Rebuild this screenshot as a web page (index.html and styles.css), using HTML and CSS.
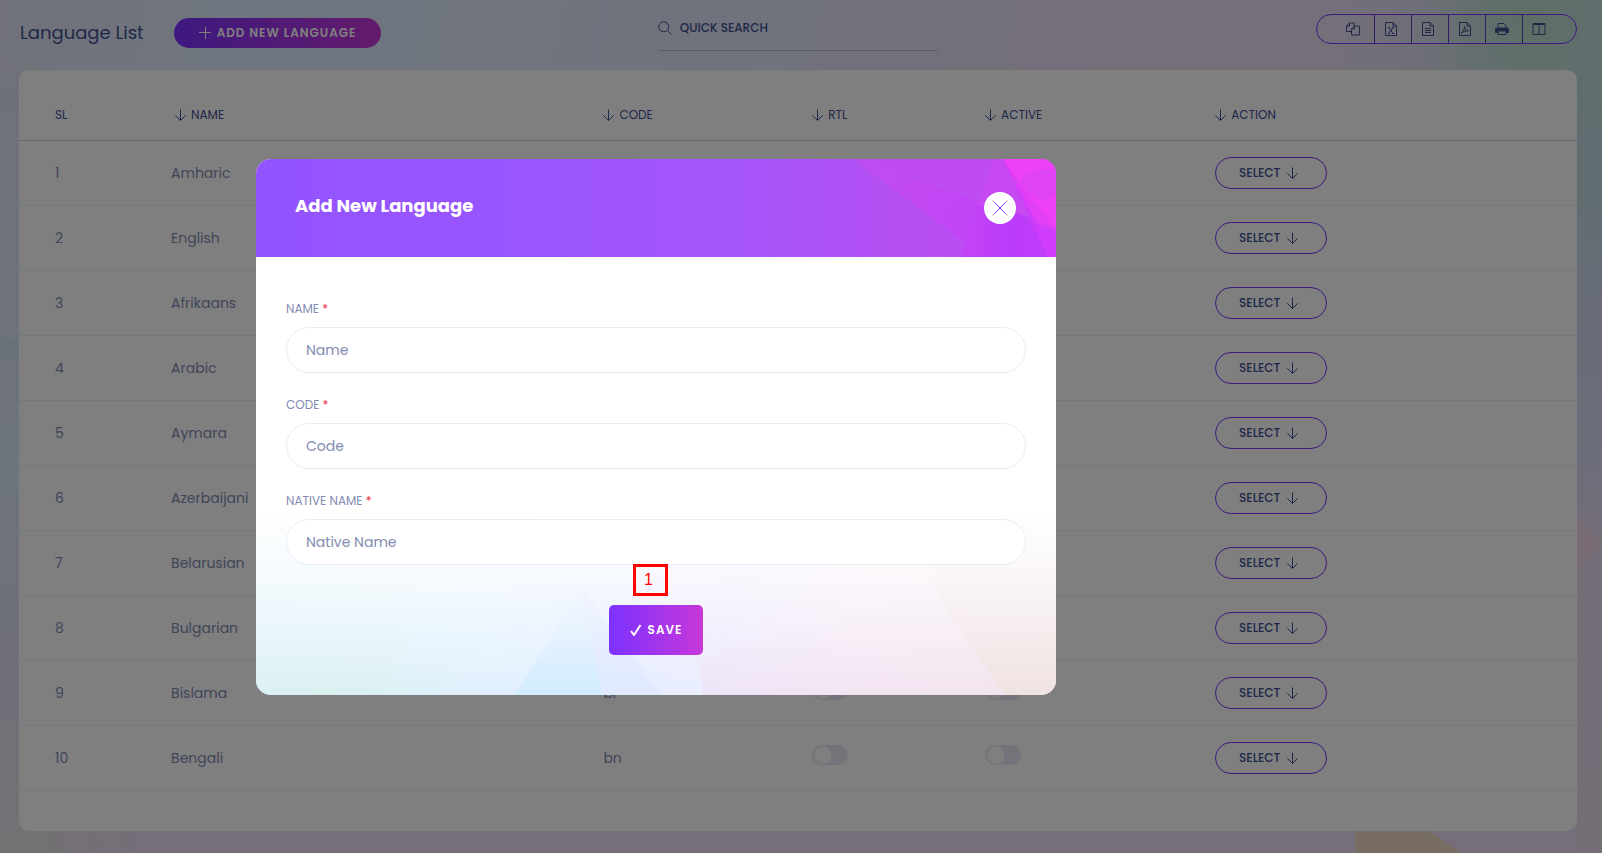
FILE: index.html
```html
<!DOCTYPE html>
<html lang="en">
<head>
<meta charset="utf-8">
<meta name="viewport" content="width=device-width, initial-scale=1">
<title>Language List</title>
<link rel="stylesheet" href="styles.css">
</head>
<body>
<svg class="symbols" aria-hidden="true">
  <symbol id="down" viewBox="0 0 12 12"><path d="M5.500.5v11M.3 6.300 5.500 11.500l5.200-5.200"/></symbol>
  <symbol id="plus" viewBox="0 0 12 12"><path d="M6.500 0v12M0 5.500h12"/></symbol>
  <symbol id="search" viewBox="0 0 14 14"><circle cx="5.800" cy="5.800" r="5"/><path d="m9.500 9.500 4 4"/></symbol>
  <symbol id="close" viewBox="0 0 12 12"><path d="m0 0 12 12M12 0 0 12"/></symbol>
  <symbol id="check" viewBox="0 0 12 12"><path d="m1 7 3 4L10.500 1"/></symbol>
  <symbol id="copy" viewBox="0 0 14 14"><path d="M5.500 9.500h-5V4L3.500 1H8v3M3.500 1v3h-3M5.500 7 8.500 4h5v9h-8zM8.500 4v3h-3"/></symbol>
  <symbol id="excel" viewBox="0 0 14 14"><path d="M1.500.5H9l3.500 3.500v9.500h-11zM9 .5V4h3.500M4.500 5.500l4.500 6M9 5.500l-4.500 6M4 5.500h2M8 5.500h2M4 11.500h2M8 11.500h2"/></symbol>
  <symbol id="text" viewBox="0 0 14 14"><path d="M1.500.5H9l3.500 3.500v9.500h-11zM9 .5V4h3.500M4 6.500h6M4 8.500h6M4 10.500h6"/></symbol>
  <symbol id="pdf" viewBox="0 0 14 14"><path d="M1.500.5H9l3.500 3.500v9.500h-11zM9 .5V4h3.500M6.500 4.500c0 3 1.500 4.500 4 4.500-3-.6-5.500.5-7.500 2.500 2-1.500 3.500-4 3.500-7z"/></symbol>
  <symbol id="print" viewBox="0 0 14 14"><path d="M3 6.500V1.500h6l2 2v3M3 10v2.500h8V10"/><path class="solid" d="M1.500 6h11l1 1v3.500h-2.500V9H3v1.500H.5V7z"/></symbol>
  <symbol id="columns" viewBox="0 0 14 14"><path d="M1 1.500h12v11H1zM7 1.500v11M1 2.500h12"/></symbol>
</svg>

<svg class="backdrop" viewBox="0 0 1602 853" preserveAspectRatio="none" aria-hidden="true">
  <defs>
    <linearGradient id="left-edge" x1="0" y1="0" x2="0" y2="1"><stop offset="0" stop-color="#e0e2f2"/><stop offset=".2" stop-color="#dde6f6"/><stop offset=".55" stop-color="#dce8f6"/><stop offset=".78" stop-color="#e0e0f2"/><stop offset="1" stop-color="#e6e4ec"/></linearGradient>
    <linearGradient id="right-edge" x1="0" y1="0" x2="0" y2="1"><stop offset="0" stop-color="#c0dcdc"/><stop offset=".18" stop-color="#c4dae4"/><stop offset=".3" stop-color="#ced8ee"/><stop offset=".5" stop-color="#dadcf6"/><stop offset=".62" stop-color="#eadaf0"/><stop offset="1" stop-color="#ecdcee"/></linearGradient>
  </defs>
  <path d="M0 60H19V831H0z" fill="url(#left-edge)"/>
  <path d="M1577 60H1602V853H1577z" fill="url(#right-edge)"/>
  <path d="M0 334 19 344V356L0 360z" fill="#d2e2f2"/>
  <path d="M1577 518 1602 540 1577 574z" fill="#f0d6e8"/>
  <path d="M1355 831h73l34 22h-107z" fill="#efdac4"/>
</svg>

<main class="page">
  <header class="toolbar">
    <div class="heading">
      <h1>Language List</h1>
      <button class="add" type="button"><svg class="icon"><use href="#plus"/></svg>ADD NEW LANGUAGE</button>
    </div>
    <label class="search"><svg class="icon"><use href="#search"/></svg><input type="search" placeholder="QUICK SEARCH" aria-label="Quick search"></label>
    <div class="exports">
      <button type="button" aria-label="Copy"><svg class="icon"><use href="#copy"/></svg></button>
      <button type="button" aria-label="Excel"><svg class="icon"><use href="#excel"/></svg></button>
      <button type="button" aria-label="CSV"><svg class="icon"><use href="#text"/></svg></button>
      <button type="button" aria-label="PDF"><svg class="icon"><use href="#pdf"/></svg></button>
      <button type="button" aria-label="Print"><svg class="icon"><use href="#print"/></svg></button>
      <button type="button" aria-label="Columns"><svg class="icon"><use href="#columns"/></svg></button>
    </div>
  </header>

  <section class="card">
    <table>
      <colgroup><col class="c-sl"><col class="c-name"><col class="c-code"><col class="c-rtl"><col class="c-active"><col></colgroup>
      <thead>
        <tr><th>SL</th><th class="inset"><svg class="icon"><use href="#down"/></svg>NAME</th><th><svg class="icon"><use href="#down"/></svg>CODE</th><th><svg class="icon"><use href="#down"/></svg>RTL</th><th><svg class="icon"><use href="#down"/></svg>ACTIVE</th><th><svg class="icon"><use href="#down"/></svg>ACTION</th></tr>
      </thead>
      <tbody>
        <tr><td>1</td><td>Amharic</td><td>am</td><td><input class="toggle" type="checkbox" aria-label="RTL"></td><td><input class="toggle" type="checkbox" aria-label="Active"></td><td><button class="select" type="button">SELECT<svg class="icon"><use href="#down"/></svg></button></td></tr>
        <tr><td>2</td><td>English</td><td>en</td><td><input class="toggle" type="checkbox" aria-label="RTL"></td><td><input class="toggle" type="checkbox" aria-label="Active"></td><td><button class="select" type="button">SELECT<svg class="icon"><use href="#down"/></svg></button></td></tr>
        <tr><td>3</td><td>Afrikaans</td><td>af</td><td><input class="toggle" type="checkbox" aria-label="RTL"></td><td><input class="toggle" type="checkbox" aria-label="Active"></td><td><button class="select" type="button">SELECT<svg class="icon"><use href="#down"/></svg></button></td></tr>
        <tr><td>4</td><td>Arabic</td><td>ar</td><td><input class="toggle" type="checkbox" aria-label="RTL"></td><td><input class="toggle" type="checkbox" aria-label="Active"></td><td><button class="select" type="button">SELECT<svg class="icon"><use href="#down"/></svg></button></td></tr>
        <tr><td>5</td><td>Aymara</td><td>ay</td><td><input class="toggle" type="checkbox" aria-label="RTL"></td><td><input class="toggle" type="checkbox" aria-label="Active"></td><td><button class="select" type="button">SELECT<svg class="icon"><use href="#down"/></svg></button></td></tr>
        <tr><td>6</td><td>Azerbaijani</td><td>az</td><td><input class="toggle" type="checkbox" aria-label="RTL"></td><td><input class="toggle" type="checkbox" aria-label="Active"></td><td><button class="select" type="button">SELECT<svg class="icon"><use href="#down"/></svg></button></td></tr>
        <tr><td>7</td><td>Belarusian</td><td>be</td><td><input class="toggle" type="checkbox" aria-label="RTL"></td><td><input class="toggle" type="checkbox" aria-label="Active"></td><td><button class="select" type="button">SELECT<svg class="icon"><use href="#down"/></svg></button></td></tr>
        <tr><td>8</td><td>Bulgarian</td><td>bg</td><td><input class="toggle" type="checkbox" aria-label="RTL"></td><td><input class="toggle" type="checkbox" aria-label="Active"></td><td><button class="select" type="button">SELECT<svg class="icon"><use href="#down"/></svg></button></td></tr>
        <tr><td>9</td><td>Bislama</td><td>bi</td><td><input class="toggle" type="checkbox" aria-label="RTL"></td><td><input class="toggle" type="checkbox" aria-label="Active"></td><td><button class="select" type="button">SELECT<svg class="icon"><use href="#down"/></svg></button></td></tr>
        <tr><td>10</td><td>Bengali</td><td>bn</td><td><input class="toggle" type="checkbox" aria-label="RTL"></td><td><input class="toggle" type="checkbox" aria-label="Active"></td><td><button class="select" type="button">SELECT<svg class="icon"><use href="#down"/></svg></button></td></tr>
      </tbody>
    </table>
  </section>
</main>

<div class="overlay">
  <section class="modal" role="dialog" aria-labelledby="modal-title">
    <header class="modal-head">
      <svg class="art" viewBox="0 0 800 98" preserveAspectRatio="none" aria-hidden="true">
        <defs>
          <linearGradient id="ray" gradientUnits="userSpaceOnUse" x1="597" y1="0" x2="729" y2="60"><stop offset="0" stop-color="#b951f3"/><stop offset=".35" stop-color="#c24af2"/><stop offset="1" stop-color="#c143f6"/></linearGradient>
          <linearGradient id="low" gradientUnits="userSpaceOnUse" x1="708" y1="80" x2="800" y2="80"><stop offset="0" stop-color="#c343f5"/><stop offset=".5" stop-color="#bb3cfa"/><stop offset="1" stop-color="#c23cfa"/></linearGradient>
        </defs>
        <path d="M597 0H800V98H729z" fill="#be4cf2"/>
        <path d="M597 0 760 54V98H729z" fill="url(#ray)"/>
        <path d="M737 0H800V98H704z" fill="#c649f2"/>
        <path d="M722 46 760 54 800 68V98H704z" fill="url(#low)"/>
        <path d="M747 0H800V98H792z" fill="#d03cfa"/>
        <path d="M747 0H800V71L781 64z" fill="#e03ff5"/>
        <path d="M747 0H800V71z" fill="#ee40f6"/>
        <path d="M764 20Q778 8 800 11V34L788 42Q774 38 764 20z" fill="#de44f4"/>
      </svg>
      <h2 id="modal-title">Add New Language</h2>
      <button class="close" type="button" aria-label="Close"><svg class="icon"><use href="#close"/></svg></button>
    </header>
    <form class="modal-body">
      <svg class="art" viewBox="0 0 800 438" preserveAspectRatio="none" aria-hidden="true">
        <defs>
          <linearGradient id="fade-blue" x1="0" y1="0" x2="0" y2="1"><stop offset="0" stop-color="#f0f4ff" stop-opacity=".3"/><stop offset="1" stop-color="#d0ecfd"/></linearGradient>
          <linearGradient id="fade-ice" x1="0" y1="0" x2="0" y2="1"><stop offset="0" stop-color="#eef2ff" stop-opacity="0"/><stop offset="1" stop-color="#e9efff"/></linearGradient>
          <linearGradient id="fade-deep" x1="0" y1="0" x2="0" y2="1"><stop offset="0" stop-color="#eceeff" stop-opacity=".2"/><stop offset="1" stop-color="#dfe9fe"/></linearGradient>
          <linearGradient id="fade-pink" x1="0" y1="0" x2="0" y2="1"><stop offset="0" stop-color="#f9eef5" stop-opacity=".2"/><stop offset="1" stop-color="#f3e2ef"/></linearGradient>
          <linearGradient id="fade-sand" x1="0" y1="0" x2="0" y2="1"><stop offset="0" stop-color="#faf3f2" stop-opacity="0"/><stop offset="1" stop-color="#efe3e0"/></linearGradient>
        </defs>
        <path d="M326 330 405 438H346z" fill="url(#fade-deep)"/>
        <path d="M326 330 346 438H259z" fill="url(#fade-blue)"/>
        <path d="M355 370H441L447 438H405z" fill="url(#fade-ice)"/>
        <path d="M600 358 720 340 690 385 590 438H447L440 400z" fill="url(#fade-pink)" opacity=".4"/>
        <path d="M692 355 749 438H580L700 382z" fill="url(#fade-pink)" opacity=".6"/>
        <path d="M660 290H800V438H749L692 356z" fill="url(#fade-sand)"/>
      </svg>
      <div class="field"><label for="name">NAME <span>*</span></label><input id="name" type="text" placeholder="Name"></div>
      <div class="field"><label for="code">CODE <span>*</span></label><input id="code" type="text" placeholder="Code"></div>
      <div class="field"><label for="native">NATIVE NAME <span>*</span></label><input id="native" type="text" placeholder="Native Name"></div>
      <div class="actions">
        <button class="save" type="button"><svg class="icon"><use href="#check"/></svg>SAVE</button>
        <span class="marker">1</span>
      </div>
    </form>
  </section>
</div>
</body>
</html>
```

FILE: styles.css
```css
* { box-sizing: border-box; }

body {
  margin: 0;
  min-height: 100vh;
  font-family: Poppins, Inter, "Open Sans", sans-serif;
  font-size: 14px;
  color: #828bb2;
  background:
    radial-gradient(circle at 1530px 20px, #b8dccb, transparent 110px),
    radial-gradient(ellipse 260px 300px at 1600px 80px, #c2dde4, transparent),
    radial-gradient(circle at 0 853px, #e4e4e4, transparent 150px),
    linear-gradient(to bottom, transparent 55%, #ecdcf2 85%),
    linear-gradient(100deg, #e2e4f4 0, #deeafc 12%, #deeafc 24%, #e0e4f8 45%, #e9dff4 60%, #e8def2 80%, #eadcf0 100%);
}

button, input { font: inherit; margin: 0; }
button { padding: 0; border: 0; background: none; cursor: pointer; }
h1, h2 { margin: 0; }

.symbols { display: none; }
.icon { width: 12px; height: 12px; flex: none; fill: none; stroke: currentColor; stroke-width: 1; }
.solid { fill: currentColor; }
.backdrop { position: absolute; inset: 0; width: 100%; height: 100%; }
.page { position: relative; padding: 0 25px 22px 19px; }

.toolbar {
  display: grid;
  grid-template-columns: 41% 280px 1fr;
  align-items: start;
  padding: 14px 0 19px;
}
.heading { display: flex; align-items: center; gap: 27px; padding: 4px 0 0 1px; }
h1 { width: 127px; font-size: 18px; font-weight: 400; line-height: 26px; color: #415094; white-space: nowrap; }
.add {
  display: flex; align-items: center; justify-content: center; gap: 6px;
  width: 207px; height: 30px; border-radius: 15px;
  font-size: 12px; font-weight: 600; letter-spacing: 1px; color: #fff;
  background: linear-gradient(90deg, #7c32ff, #c738d8);
}
.search { display: flex; align-items: center; gap: 8px; height: 37px; padding-bottom: 9px; border-bottom: 1px solid #b9b7d6; color: #415094; }
.search .icon { width: 14px; height: 14px; }
.search input { flex: 1; min-width: 0; padding: 0; border: 0; background: none; font-size: 12px; font-weight: 500; }
.search input::placeholder { color: #415094; opacity: 1; }

.exports { display: flex; justify-self: end; height: 30px; border: 1px solid #7c32ff; border-radius: 15px; color: #415094; }
.exports button { display: grid; place-items: center; width: 37px; padding-right: 5px; border-right: 1px solid #5c3cc0; color: inherit; }
.exports button:first-child { width: 58px; padding-left: 20px; }
.exports button:last-child { width: 53px; padding-right: 21px; border: 0; }
.exports .icon { width: 14px; height: 14px; }

.card { padding: 20px 0 40px; border-radius: 10px; background: #fff; }
table { width: 100%; border-collapse: collapse; table-layout: fixed; text-align: left; }
.c-sl { width: 9.76%; }
.c-name { width: 27.75%; }
.c-code { width: 13.4%; }
.c-rtl { width: 11.1%; }
.c-active { width: 14.77%; }
th, td { padding: 0; border-bottom: 1px solid #edeefa; }
th { height: 50px; font-size: 12px; font-weight: 400; color: #415094; border-color: #d4d3ea; }
th .icon { margin-right: 4px; vertical-align: -2px; }
th.inset { padding-left: 4px; }
td { height: 65px; padding-top: 2px; }
th:first-child, td:first-child { padding-left: 36px; }

.toggle {
  display: block; appearance: none; width: 36px; height: 20px; margin-bottom: 7px; border-radius: 10px;
  background: radial-gradient(circle at 11px 10px, #fff 8px, #e7e8f2 9px);
}
.select {
  display: flex; align-items: center; justify-content: center; gap: 7px;
  width: 112px; height: 32px; margin-bottom: 2px; padding-right: 4px; border: 1px solid #7c32ff; border-radius: 16px;
  font-size: 12px; font-weight: 500; color: #415094;
}

.overlay { position: fixed; inset: 0; padding: 159px 20px 20px 256px; overflow: auto; background: rgba(0, 0, 0, .5); }
.modal { max-width: 800px; border-radius: 15px; overflow: hidden; background: #fff; }
.art { position: absolute; inset: 0; width: 100%; height: 100%; }
.modal-head {
  position: relative; display: flex; align-items: center; justify-content: space-between;
  height: 98px; padding: 0 40px 0 39px; color: #fff;
  background: linear-gradient(90deg, #9254ff, #9855ff 30%, #a855f8 65%, #b350f4 78%, #bd4cf2 92%);
}
h2 { position: relative; padding-bottom: 4px; font-size: 18px; font-weight: 700; line-height: 26px; }
.close { position: relative; display: grid; place-items: center; width: 32px; height: 32px; border-radius: 50%; background: #fff; color: #7c32ff; }
.modal-body {
  position: relative; padding: 40px 30px;
  background:
    linear-gradient(to bottom, #fff 58%, rgba(255, 255, 255, .65) 75%, transparent),
    radial-gradient(ellipse 140px 70px at 70px 100%, #daf0f0, transparent),
    linear-gradient(90deg, #dcf0f8 0, #e0f0fe 30%, #e2ebff 45%, #ece6fc 60%, #f3e6f5 75%, #f2e6ee);
}
.field { position: relative; display: grid; gap: 6px; margin-bottom: 20px; }
.field label { font-size: 12px; line-height: 24px; }
.field span { color: #e8353f; }
.field input { width: 100%; height: 46px; padding: 0 19px; border: 1px solid #ecebf5; border-radius: 23px; background: #fff; color: #415094; }
.field input::placeholder { color: #828bb2; opacity: 1; }
.actions { position: relative; display: flex; justify-content: center; padding-top: 20px; }
.save {
  display: flex; align-items: center; justify-content: center; gap: 6px;
  width: 94px; height: 50px; border-radius: 5px;
  font-size: 12px; font-weight: 600; letter-spacing: 1px; color: #fff;
  background: linear-gradient(90deg, #7c32ff, #c738d8);
}
.save .icon { stroke-width: 2; }
.marker {
  position: absolute; top: -21px; left: 347px;
  width: 35px; height: 32px; padding-left: 8px; border: 3px solid #f00;
  font: 16px/26px "Liberation Sans", sans-serif; color: #f00;
}
```
